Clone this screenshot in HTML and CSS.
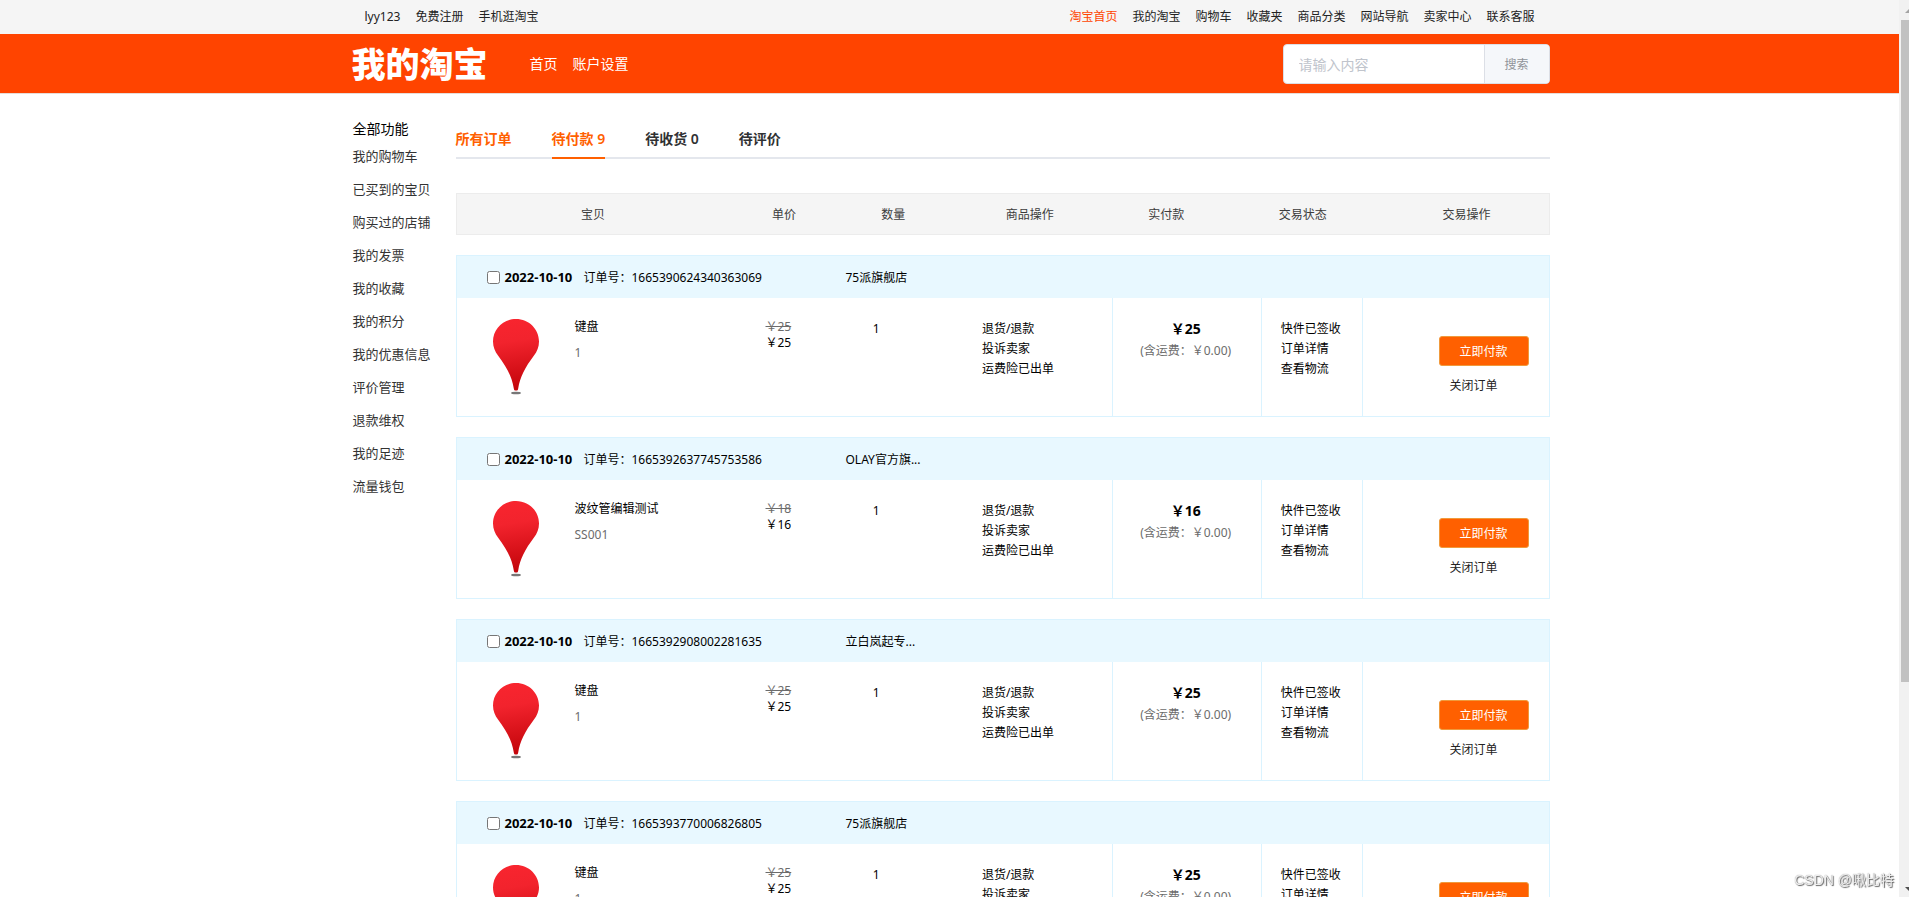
FILE: index.html
```html
<!DOCTYPE html>
<html lang="zh-CN">
<head>
<meta charset="utf-8">
<title>我的淘宝</title>
<link rel="stylesheet" href="styles.css">
</head>
<body>
<svg class="defs" aria-hidden="true">
  <defs>
    <linearGradient id="pin-red" x1="0" y1="0" x2="0.1" y2="1">
      <stop offset="0" stop-color="#f9252f"/>
      <stop offset="0.35" stop-color="#f2232d"/>
      <stop offset="1" stop-color="#c5060c"/>
    </linearGradient>
    <symbol id="pin" viewBox="0 0 46 76">
      <ellipse cx="23" cy="74" rx="5" ry="1.3" fill="#777"/>
      <path d="M23 0C10.2 0 0 10 0 22.500C0 28 2 32.500 5 36.500C14 48.500 19 58 20.800 69.500C21 71.300 21.600 71.500 23 71.500C24.400 71.500 25 71.300 25.200 69.500C27 58 32 48.500 41 36.500C44 32.500 46 28 46 22.500C46 10 35.800 0 23 0Z" fill="url(#pin-red)"/>
    </symbol>
  </defs>
</svg>

<div class="page">
  <nav class="topbar">
    <div class="container topbar-row">
      <div class="links">
        <a href="#">lyy123</a>
        <a href="#">免费注册</a>
        <a href="#">手机逛淘宝</a>
      </div>
      <div class="links">
        <a href="#" class="current">淘宝首页</a>
        <a href="#">我的淘宝</a>
        <a href="#">购物车</a>
        <a href="#">收藏夹</a>
        <a href="#">商品分类</a>
        <a href="#">网站导航</a>
        <a href="#">卖家中心</a>
        <a href="#">联系客服</a>
      </div>
    </div>
  </nav>

  <header class="header">
    <div class="container header-row">
      <a href="#" class="logo">我的淘宝</a>
      <nav class="header-nav">
        <a href="#">首页</a>
        <a href="#">账户设置</a>
      </nav>
      <form class="search">
        <input type="text" placeholder="请输入内容" aria-label="搜索内容">
        <button type="button">搜索</button>
      </form>
    </div>
  </header>

  <div class="container content">
    <aside class="sidebar">
      <h2>全部功能</h2>
      <a href="#">我的购物车</a>
      <a href="#">已买到的宝贝</a>
      <a href="#">购买过的店铺</a>
      <a href="#">我的发票</a>
      <a href="#">我的收藏</a>
      <a href="#">我的积分</a>
      <a href="#">我的优惠信息</a>
      <a href="#">评价管理</a>
      <a href="#">退款维权</a>
      <a href="#">我的足迹</a>
      <a href="#">流量钱包</a>
    </aside>

    <main class="main">
      <nav class="tabs">
        <a href="#" class="hot">所有订单</a>
        <a href="#" class="hot active">待付款 9</a>
        <a href="#">待收货 0</a>
        <a href="#">待评价</a>
      </nav>

      <table class="columns">
        <tr>
          <th class="w25">宝贝</th>
          <th class="w10">单价</th>
          <th class="w10">数量</th>
          <th class="w15">商品操作</th>
          <th class="w10">实付款</th>
          <th class="w15">交易状态</th>
          <th class="w15">交易操作</th>
        </tr>
      </table>

      <table class="order">
        <colgroup><col class="w25"><col class="w10"><col class="w10"><col class="w15"><col class="col-pay"><col class="col-status"><col></colgroup>
        <tr class="order-head"><td colspan="7"><div class="order-info">
          <label><input type="checkbox"><b>2022-10-10</b></label>
          <span class="number">订单号：1665390624340363069</span>
          <span>75派旗舰店</span>
        </div></td></tr>
        <tr class="order-body">
          <td><div class="goods"><svg class="pin"><use href="#pin"/></svg><div><p>键盘</p><p class="sku">1</p></div></div></td>
          <td class="price"><s>￥25</s><br>￥25</td>
          <td class="count">1</td>
          <td class="ops">退货/退款<br>投诉卖家<br>运费险已出单</td>
          <td class="pay"><b>￥25</b><span>(含运费：￥0.00)</span></td>
          <td class="status">快件已签收<br>订单详情<br>查看物流</td>
          <td class="action"><button type="button">立即付款</button><a href="#">关闭订单</a></td>
        </tr>
      </table>

      <table class="order">
        <colgroup><col class="w25"><col class="w10"><col class="w10"><col class="w15"><col class="col-pay"><col class="col-status"><col></colgroup>
        <tr class="order-head"><td colspan="7"><div class="order-info">
          <label><input type="checkbox"><b>2022-10-10</b></label>
          <span class="number">订单号：1665392637745753586</span>
          <span>OLAY官方旗...</span>
        </div></td></tr>
        <tr class="order-body">
          <td><div class="goods"><svg class="pin"><use href="#pin"/></svg><div><p>波纹管编辑测试</p><p class="sku">SS001</p></div></div></td>
          <td class="price"><s>￥18</s><br>￥16</td>
          <td class="count">1</td>
          <td class="ops">退货/退款<br>投诉卖家<br>运费险已出单</td>
          <td class="pay"><b>￥16</b><span>(含运费：￥0.00)</span></td>
          <td class="status">快件已签收<br>订单详情<br>查看物流</td>
          <td class="action"><button type="button">立即付款</button><a href="#">关闭订单</a></td>
        </tr>
      </table>

      <table class="order">
        <colgroup><col class="w25"><col class="w10"><col class="w10"><col class="w15"><col class="col-pay"><col class="col-status"><col></colgroup>
        <tr class="order-head"><td colspan="7"><div class="order-info">
          <label><input type="checkbox"><b>2022-10-10</b></label>
          <span class="number">订单号：1665392908002281635</span>
          <span>立白岚起专...</span>
        </div></td></tr>
        <tr class="order-body">
          <td><div class="goods"><svg class="pin"><use href="#pin"/></svg><div><p>键盘</p><p class="sku">1</p></div></div></td>
          <td class="price"><s>￥25</s><br>￥25</td>
          <td class="count">1</td>
          <td class="ops">退货/退款<br>投诉卖家<br>运费险已出单</td>
          <td class="pay"><b>￥25</b><span>(含运费：￥0.00)</span></td>
          <td class="status">快件已签收<br>订单详情<br>查看物流</td>
          <td class="action"><button type="button">立即付款</button><a href="#">关闭订单</a></td>
        </tr>
      </table>

      <table class="order">
        <colgroup><col class="w25"><col class="w10"><col class="w10"><col class="w15"><col class="col-pay"><col class="col-status"><col></colgroup>
        <tr class="order-head"><td colspan="7"><div class="order-info">
          <label><input type="checkbox"><b>2022-10-10</b></label>
          <span class="number">订单号：1665393770006826805</span>
          <span>75派旗舰店</span>
        </div></td></tr>
        <tr class="order-body">
          <td><div class="goods"><svg class="pin"><use href="#pin"/></svg><div><p>键盘</p><p class="sku">1</p></div></div></td>
          <td class="price"><s>￥25</s><br>￥25</td>
          <td class="count">1</td>
          <td class="ops">退货/退款<br>投诉卖家<br>运费险已出单</td>
          <td class="pay"><b>￥25</b><span>(含运费：￥0.00)</span></td>
          <td class="status">快件已签收<br>订单详情<br>查看物流</td>
          <td class="action"><button type="button">立即付款</button><a href="#">关闭订单</a></td>
        </tr>
      </table>
    </main>
  </div>
</div>

<div class="scrollbar" aria-hidden="true">
  <svg class="arrow" viewBox="0 0 8 4"><path d="M0 4L4 0L8 4Z" fill="#a3a3a3"/></svg>
  <div class="track"><div class="thumb"></div></div>
  <svg class="arrow" viewBox="0 0 8 4"><path d="M0 0L4 4L8 0Z" fill="#505050"/></svg>
</div>
<div class="watermark">CSDN @啾比特</div>
</body>
</html>
```

FILE: styles.css
```css
* {
  box-sizing: border-box;
}

body {
  margin: 0;
  display: flex;
  height: 100vh;
  overflow: hidden;
  background: #fff;
  color: #000;
  font: 12px/20px "Noto Sans", "Noto Sans CJK SC", sans-serif;
}

a {
  color: inherit;
  text-decoration: none;
}

p, h2 {
  margin: 0;
}

button, input {
  font-family: inherit;
}

.defs {
  position: absolute;
  width: 0;
  height: 0;
}

.page {
  flex: 1;
  min-width: 0;
}

.container {
  max-width: 1200px;
  margin: 0 auto;
}

/* Top bar */
.topbar {
  background: #f5f5f5;
  color: #222;
}

.topbar-row {
  display: flex;
  justify-content: space-between;
  padding: 7px 15px;
}

.links {
  display: flex;
  gap: 15px;
}

.links .current {
  color: #ff4400;
}

/* Header */
.header {
  background: #ff4400;
  border-bottom: 1px solid #e6dcd8;
  color: #fff;
}

.header-row {
  display: flex;
  align-items: center;
  padding: 10px 0 9px 2px;
}

.logo {
  font-size: 34px;
  font-weight: 900;
  line-height: 40px;
}

.header-nav {
  display: flex;
  gap: 15px;
  margin-left: 42px;
  font-size: 14px;
}

.search {
  display: flex;
  width: 267px;
  height: 40px;
  margin-left: auto;
  border: 1px solid #dcdfe6;
  border-radius: 4px;
  background: #fff;
  overflow: hidden;
}

.search input {
  flex: 1;
  min-width: 0;
  padding: 0 15px;
  border: 0;
  background: none;
  font-size: 14px;
}

.search input::placeholder {
  color: #c0c4cc;
}

.search button {
  width: 65px;
  padding: 0;
  border: 0;
  border-left: 1px solid #dcdfe6;
  background: #f5f7fa;
  color: #909399;
  font-size: 12px;
}

/* Content */
.content {
  display: flex;
  padding-top: 25px;
}

.sidebar {
  width: 106px;
  padding-left: 3px;
  font-size: 13px;
  color: #333;
}

.sidebar h2 {
  margin-bottom: 7px;
  color: #000;
  font-size: 14px;
  font-weight: 400;
  line-height: 20px;
}

.sidebar a {
  display: block;
  padding-bottom: 13px;
}

.main {
  flex: 1;
  min-width: 0;
}

.tabs {
  display: flex;
  gap: 40px;
  height: 40px;
  margin-bottom: 34px;
  box-shadow: inset 0 -2px #e4e7ed;
  color: #303133;
  font-size: 14px;
  font-weight: 600;
  line-height: 40px;
}

.tabs .hot {
  color: #ff6000;
}

.tabs .active {
  box-shadow: inset 0 -2px #ff6000;
}

/* Tables */
table {
  width: 100%;
  table-layout: fixed;
  border-collapse: separate;
  border-spacing: 0;
}

th, td {
  padding: 0;
  text-align: left;
  vertical-align: top;
}

.w10 {
  width: 10%;
}

.w15 {
  width: 15%;
}

.w25 {
  width: 25%;
}

.col-pay {
  width: 149px;
}

.col-status {
  width: 101px;
}

.columns {
  border: 1px solid #ececec;
  background: #f5f5f5;
  color: #3c3c3c;
}

.columns th {
  padding: 11px 0 9px;
  font-weight: 400;
  text-align: center;
}

.order {
  margin-top: 20px;
  border: 1px solid #daf3ff;
}

.order-head td {
  background: #e8f8ff;
}

.order-info {
  display: flex;
  align-items: center;
  height: 42px;
  padding-left: 30px;
}

.order-info label {
  display: flex;
  align-items: center;
  gap: 5px;
  width: 97px;
}

.order-info input {
  width: 13px;
  height: 13px;
  margin: 0;
}

.order-info b {
  font-size: 13px;
}

.order-info span {
  padding-top: 2px;
}

.order-info .number {
  width: 262px;
}

.order-body td {
  height: 118px;
}

.goods {
  display: flex;
  gap: 36px;
  padding: 21px 0 0 36px;
}

.goods p {
  line-height: 16px;
}

.goods .sku {
  margin-top: 10px;
  color: #6c6c6c;
}

.pin {
  width: 46px;
  height: 76px;
}

.order-body .price {
  padding: 21px 0 0 36px;
  line-height: 16px;
}

.price s {
  color: #6c6c6c;
}

.order-body .count,
.order-body .ops {
  padding: 21px 0 0 34px;
}

.order-body .pay {
  padding: 21px 2px 0 0;
  border-left: 1px solid #daf3ff;
  text-align: center;
}

.pay b {
  display: block;
  font-size: 14px;
}

.pay span {
  display: block;
  margin-top: 2px;
  color: #6c6c6c;
}

.order-body .status {
  padding: 21px 0 0 19px;
  border-left: 1px solid #daf3ff;
}

.order-body .action {
  padding: 38px 20px 0 0;
  border-left: 1px solid #daf3ff;
  text-align: right;
}

.action button {
  display: block;
  width: 90px;
  height: 30px;
  margin-left: auto;
  padding: 0;
  border: 1px solid #f09a3c;
  border-radius: 3px;
  background: #ff6000;
  color: #fff;
  font-size: 12px;
}

.action a {
  display: block;
  margin-top: 10px;
  padding-right: 31px;
  color: #222;
}

/* Page scrollbar, running past the right edge of the window */
.scrollbar {
  display: flex;
  flex-direction: column;
  justify-content: space-between;
  width: 10px;
  padding: 9px 0 6px 2px;
  background: #f1f1f1;
  overflow: hidden;
}

.arrow {
  width: 8px;
  height: 4px;
  margin-left: 4px;
  flex: none;
}

.track {
  flex: 1;
  padding: 7px 0;
}

.thumb {
  height: 77%;
  background: #c1c1c1;
}

.watermark {
  position: fixed;
  right: 15px;
  bottom: 7px;
  color: #eee;
  font-family: "Liberation Sans", "Noto Sans CJK SC", sans-serif;
  font-size: 14px;
  text-shadow: 1px 1px 1px #666, 0 0 1px #888;
}
```
